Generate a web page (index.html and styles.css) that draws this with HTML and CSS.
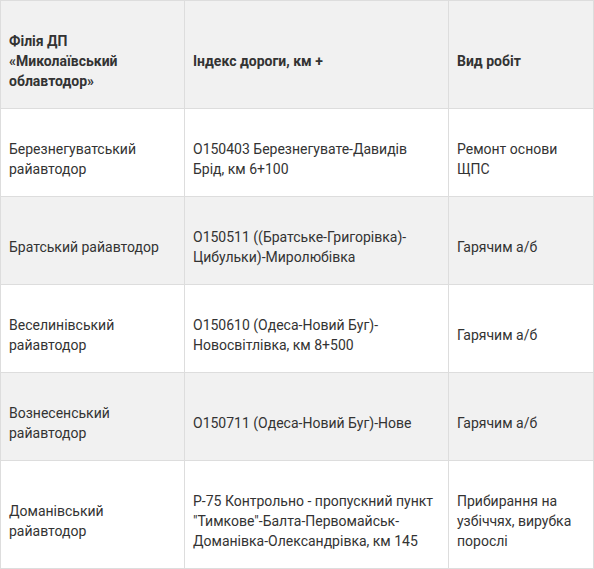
FILE: index.html
```html
<!DOCTYPE html>
<html lang="uk">
<head>
<meta charset="utf-8">
<link rel="stylesheet" href="styles.css">
</head>
<body>
<table class="works">
  <colgroup>
    <col class="c1"><col class="c2"><col class="c3">
  </colgroup>
  <thead>
    <tr>
      <th>Філія ДП «Миколаївський облавтодор»</th>
      <th>Індекс дороги, км +</th>
      <th>Вид робіт</th>
    </tr>
  </thead>
  <tbody>
    <tr>
      <td>Березнегуватський райавтодор</td>
      <td>О150403 Березнегувате-Давидів Брід, км 6+100</td>
      <td>Ремонт основи ЩПС</td>
    </tr>
    <tr>
      <td>Братський райавтодор</td>
      <td>О150511 ((Братське-Григорівка)-Цибульки)-Миролюбівка</td>
      <td>Гарячим а/б</td>
    </tr>
    <tr>
      <td>Веселинівський райавтодор</td>
      <td>О150610 (Одеса-Новий Буг)-Новосвітлівка, км 8+500</td>
      <td>Гарячим а/б</td>
    </tr>
    <tr>
      <td>Вознесенський райавтодор</td>
      <td>О150711 (Одеса-Новий Буг)-Нове</td>
      <td>Гарячим а/б</td>
    </tr>
    <tr>
      <td>Доманівський райавтодор</td>
      <td>Р-75 Контрольно - пропускний пункт "Тимкове"-Балта-Первомайськ-Доманівка-Олександрівка, км 145</td>
      <td>Прибирання на узбіччях, вирубка порослі</td>
    </tr>
  </tbody>
</table>
</body>
</html>
```
FILE: styles.css
```css
html, body {
  margin: 0;
  padding: 0;
  background: #fff;
}
.works {
  border-collapse: collapse;
  width: 593px;
  table-layout: fixed;
  font-family: Roboto, "Noto Sans", sans-serif;
  font-size: 14px;
  line-height: 20px;
  color: #333;
}
.c1 { width: 184px; }
.c2 { width: 264px; }
.c3 { width: 145px; }
.works th,
.works td {
  border: 1px solid #ddd;
  padding: 30px 8px 17px;
  text-align: left;
  vertical-align: middle;
}
.works th {
  font-weight: bold;
  background: #f1f1f1;
}
.works tbody tr:nth-child(even) td {
  background: #f1f1f1;
}
```
